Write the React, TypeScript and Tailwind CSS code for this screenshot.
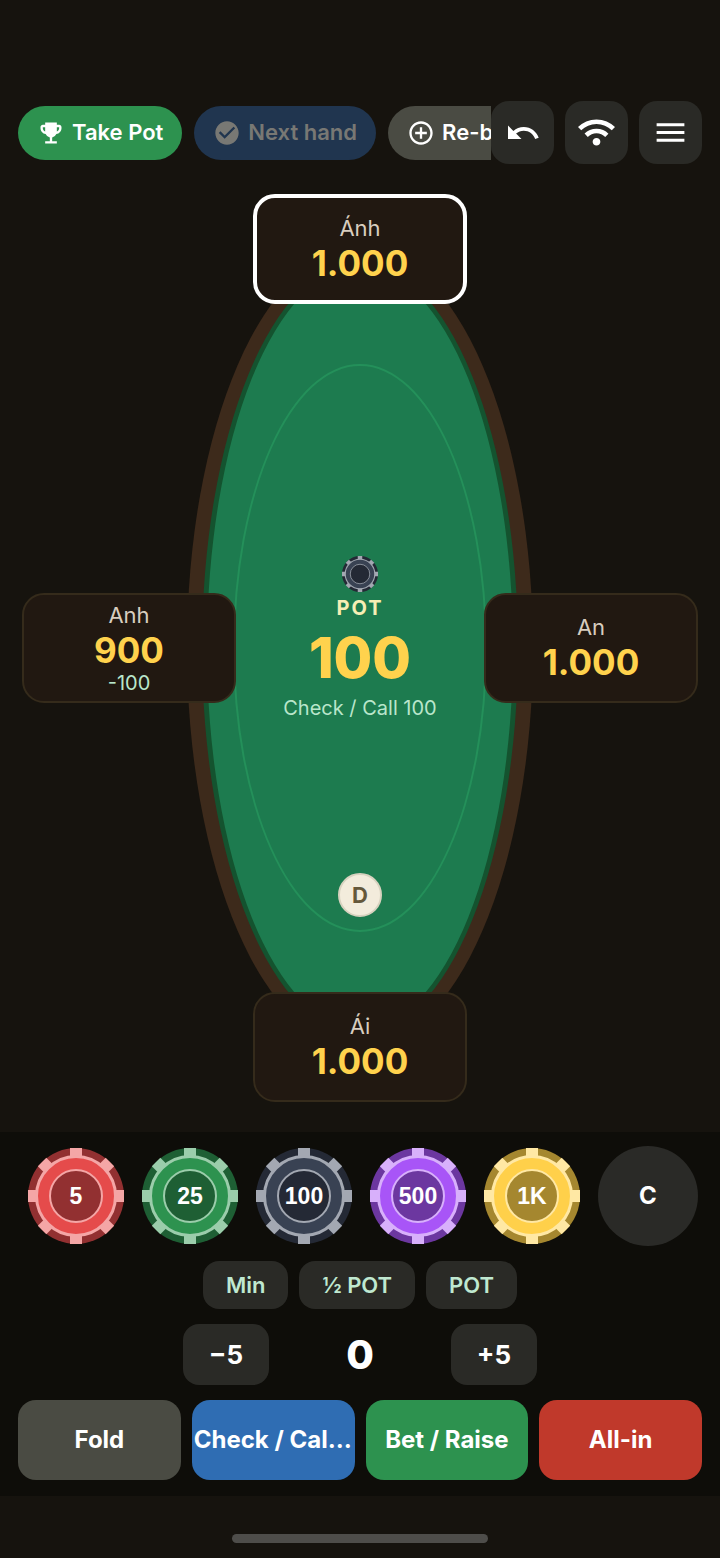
import type { ReactNode } from "react";
import { MdCheckCircle, MdControlPoint, MdEmojiEvents, MdMenu, MdUndo } from "react-icons/md";

type ChipColors = { base: string; dark: string; light: string };

const slate: ChipColors = { base: "#394253", dark: "#242935", light: "#a3a8b2" };

const chips: { label: string; colors: ChipColors }[] = [
  { label: "5", colors: { base: "#e54b4b", dark: "#923031", light: "#f4a6a6" } },
  { label: "25", colors: { base: "#2d924f", dark: "#1e5f34", light: "#9bcdab" } },
  { label: "100", colors: slate },
  { label: "500", colors: { base: "#a855f7", dark: "#6c37a0", light: "#d8b0fb" } },
  { label: "1K", colors: { base: "#ffd04a", dark: "#a5872f", light: "#ffe8a4" } },
];

function ChipFace({ colors, label, className }: { colors: ChipColors; label?: string; className: string }) {
  return (
    <svg viewBox="0 0 96 96" className={className} aria-hidden={label ? undefined : true}>
      <circle cx="48" cy="48" r="48" fill={colors.dark} />
      {[0, 45, 90, 135, 180, 225, 270, 315].map((angle) => (
        <rect key={angle} x="42" y="0" width="12" height="12" fill={colors.light} transform={`rotate(${angle} 48 48)`} />
      ))}
      <circle cx="48" cy="48" r="39.5" fill={colors.base} stroke={colors.light} strokeWidth="3" />
      <circle cx="48" cy="48" r="26" fill={colors.dark} stroke={colors.light} strokeWidth="2" />
      {label && (
        <text x="48" y="56" textAnchor="middle" fill="#ffffff" className="font-['Liberation_Sans',Arial,sans-serif] text-[23px] font-bold">
          {label}
        </text>
      )}
    </svg>
  );
}

function WifiIcon({ className }: { className: string }) {
  return (
    <svg viewBox="0 -940 960 960" fill="currentColor" className={className} aria-hidden="true">
      <path d="M480-120q-42 0-71-29t-29-71q0-42 29-71t71-29q42 0 71 29t29 71q0 42-29 71t-71 29ZM254-346l-84-86q59-59 138.5-93.5T480-560q92 0 171.5 35T790-430l-84 84q-44-44-102-69t-124-25q-66 0-124 25t-102 69ZM84-516 0-600q92-94 215-147t265-53q142 0 265 53t215 147l-84 84q-77-77-178.5-120.5T480-680q-116 0-217.5 43.5T84-516Z" />
    </svg>
  );
}

function Seat({ name, stack, bet, active = false }: { name: string; stack: string; bet?: string; active?: boolean }) {
  const border = active ? "border-4 border-white" : "border-2 border-[#352b1b]";
  return (
    <button type="button" className={`flex h-[110px] w-[214px] flex-col items-center justify-center rounded-[22px] bg-[#211811] ${border}`}>
      <span className="text-[22px] leading-7 text-[#d8cdbf]">{name}</span>
      <span className="text-[35px] leading-[42px] font-bold text-[#ffd24d]">{stack}</span>
      {bet && <span className="text-xl leading-6 text-[#b9e6cb]">{bet}</span>}
    </button>
  );
}

function Pill({ children, className, disabled }: { children: ReactNode; className: string; disabled?: boolean }) {
  return (
    <button
      type="button"
      disabled={disabled}
      className={`flex h-[54px] shrink-0 items-center gap-[7px] rounded-full px-[19px] text-[22px] font-semibold whitespace-nowrap ${className}`}
    >
      {children}
    </button>
  );
}

function IconButton({ label, children }: { label: string; children: ReactNode }) {
  return (
    <button type="button" aria-label={label} className="flex size-[63px] items-center justify-center rounded-[18px] bg-[#2a2a26] text-white">
      {children}
    </button>
  );
}

export default function App() {
  return (
    <div className="flex min-h-screen flex-col bg-[#16130e] pt-[101px] font-[Inter,sans-serif] text-white">
      <header className="flex items-center px-[18px]">
        <nav className="flex min-w-0 flex-1 gap-3 overflow-hidden">
          <Pill className="bg-[#2d924f]">
            <MdEmojiEvents className="size-7" />
            Take Pot
          </Pill>
          <Pill className="bg-[#20354f] text-[#787874]" disabled>
            <MdCheckCircle className="size-7" />
            Next hand
          </Pill>
          <Pill className="bg-[#4a4b43]">
            <MdControlPoint className="size-7" />
            Re-buy
          </Pill>
        </nav>
        <div className="flex shrink-0 gap-[11px]">
          <IconButton label="Undo">
            <MdUndo className="size-9" />
          </IconButton>
          <IconButton label="Connection">
            <WifiIcon className="size-[37px]" />
          </IconButton>
          <IconButton label="Menu">
            <MdMenu className="size-[37px]" />
          </IconButton>
        </div>
      </header>

      <main className="relative flex flex-1 flex-col items-center justify-between py-[30px]">
        <div className="absolute inset-x-[26%] inset-y-[84px] rounded-[50%] bg-[#3d2a1b] px-[15px] py-3.5">
          <div className="h-full rounded-[50%] border-[5px] border-[#14532f] bg-[#1d7b4f] px-[26px] py-[97px]">
            <div className="h-full rounded-[50%] border-2 border-[#24905a]" />
          </div>
        </div>

        <div className="relative">
          <Seat name="Ánh" stack="1.000" active />
        </div>

        <div className="relative flex w-full items-center justify-between px-[22px]">
          <Seat name="Anh" stack="900" bet="-100" />
          <section className="flex flex-col items-center pb-5">
            <ChipFace colors={slate} className="size-9" />
            <h2 className="mt-1 text-xl leading-6 font-bold tracking-[2px] text-[#f6eeb4]">POT</h2>
            <p className="mt-2 text-[56px] leading-[60px] font-extrabold text-[#ffd24d]">100</p>
            <p className="mt-2 text-xl leading-6 whitespace-nowrap text-[#b9e6cb]">Check / Call 100</p>
          </section>
          <Seat name="An" stack="1.000" />
        </div>

        <div className="relative">
          <Seat name="Ái" stack="1.000" />
          <span className="absolute -top-[119px] left-1/2 flex size-11 -translate-x-1/2 items-center justify-center rounded-full border-2 border-[#d8d2bf] bg-[#f3ecdc] text-[22px] font-bold text-[#65583a]">
            D
          </span>
        </div>
      </main>

      <section className="bg-[#0e0d09] pt-[14px] pb-4">
        <div className="flex items-center justify-between pr-[22px] pl-7">
          {chips.map((chip) => (
            <button key={chip.label} type="button" className="size-24">
              <ChipFace colors={chip.colors} label={chip.label} className="size-24" />
            </button>
          ))}
          <button type="button" className="size-[100px] rounded-full bg-[#2a2a27] text-2xl font-bold">
            C
          </button>
        </div>

        <div className="mt-[15px] flex justify-center gap-[11px] text-[22px] font-semibold text-[#bfe8d0]">
          <button type="button" className="h-12 rounded-2xl bg-[#2a2a26] px-[23px]">Min</button>
          <button type="button" className="h-12 rounded-2xl bg-[#2a2a26] px-[23px]">½ POT</button>
          <button type="button" className="h-12 rounded-2xl bg-[#2a2a26] px-[23px]">POT</button>
        </div>

        <div className="mt-[15px] flex items-center justify-center text-[26px] font-bold">
          <button type="button" className="h-[61px] w-[86px] rounded-2xl bg-[#2a2a26]">−5</button>
          <output className="w-[182px] text-center text-[40px] leading-[60px] font-extrabold">0</output>
          <button type="button" className="h-[61px] w-[86px] rounded-2xl bg-[#2a2a26]">+5</button>
        </div>

        <div className="mt-[15px] grid grid-cols-4 gap-[11px] px-[18px] text-2xl font-bold">
          <button type="button" className="h-20 truncate rounded-[18px] bg-[#4a4b43] px-0.5">Fold</button>
          <button type="button" className="h-20 truncate rounded-[18px] bg-[#2f6db3] px-0.5">Check / Call 100</button>
          <button type="button" className="h-20 truncate rounded-[18px] bg-[#2d924f] px-0.5">Bet / Raise</button>
          <button type="button" className="h-20 truncate rounded-[18px] bg-[#c0392b] px-0.5">All-in</button>
        </div>
      </section>

      <footer className="flex h-[62px] items-end justify-center pb-[15px]">
        <div className="h-[9px] w-64 rounded-full bg-[#4e4d4a]" />
      </footer>
    </div>
  );
}
